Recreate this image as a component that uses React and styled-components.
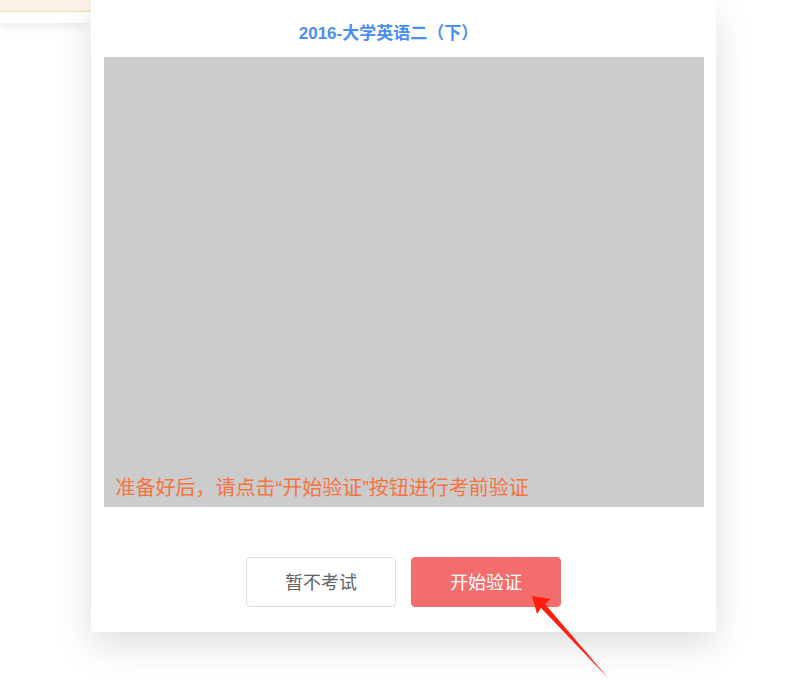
import React from 'react';
import styled, {createGlobalStyle} from 'styled-components';

const GlobalStyle = createGlobalStyle`
  html, body {
    margin: 0;
    padding: 0;
    background: #fff;
    font-family: "Liberation Sans", "Noto Sans CJK SC", sans-serif;
  }
`;

const Page = styled.div`
  position: relative;
  width: 802px;
  height: 681px;
  overflow: hidden;
  display: flex;
  align-items: flex-start;
`;

const SideHeader = styled.div`
  width: 91px;
  flex-shrink: 0;
  height: 23px;
  background: #fff;
  box-shadow: 0 2px 12px rgba(0, 0, 0, 0.1);
`;

const Notice = styled.div`
  height: 11px;
  background: #fdf4e8;
  border-bottom: 1px solid #f0dbb3;
`;

const Modal = styled.div`
  width: 625px;
  height: 632px;
  flex-shrink: 0;
  box-sizing: border-box;
  background: #fff;
  border-radius: 0 0 3px 3px;
  box-shadow: 0 14px 36px rgba(0, 0, 0, 0.13);
  padding: 22px 12px 0;
  display: flex;
  flex-direction: column;
  align-items: center;
  position: relative;
  z-index: 1;
`;

const Title = styled.h3`
  margin: 0 30px 0 0;
  height: 24px;
  line-height: 24px;
  font-size: 17px;
  font-weight: bold;
  color: #4b8ef2;
  font-family: "Liberation Sans", "Noto Sans CJK SC", sans-serif;
`;

const Preview = styled.div`
  margin-top: 11px;
  width: 600px;
  height: 450px;
  background: #cccccc;
  display: flex;
  align-items: flex-end;
  box-sizing: border-box;
  padding: 0 12px 6px;
`;

const Hint = styled.span`
  font-size: 20px;
  line-height: 26px;
  color: #f4733f;
  font-family: "Liberation Sans", "Noto Sans CJK SC", sans-serif;
`;

const Actions = styled.div`
  margin-top: 50px;
  display: flex;
  gap: 15px;
`;

const Button = styled.button`
  width: 150px;
  height: 50px;
  box-sizing: border-box;
  border-radius: 4px;
  font-size: 18px;
  line-height: 24px;
  padding: 0 0 2px;
  font-family: "Noto Sans CJK SC", sans-serif;
  cursor: pointer;
  border: 1px solid ${p => (p.$primary ? '#f46d6d' : '#dcdfe6')};
  background: ${p => (p.$primary ? '#f46d6d' : '#fff')};
  color: ${p => (p.$primary ? '#fff' : '#606266')};
`;

const Arrow = styled.svg`
  position: absolute;
  left: 0;
  top: 0;
  z-index: 2;
  pointer-events: none;
`;

const App = () => (
    <Page>
        <GlobalStyle/>
        <SideHeader>
            <Notice/>
        </SideHeader>
        <Modal>
            <Title>2016-大学英语二（下）</Title>
            <Preview>
                <Hint>准备好后，请点击“开始验证”按钮进行考前验证</Hint>
            </Preview>
            <Actions>
                <Button>暂不考试</Button>
                <Button $primary>开始验证</Button>
            </Actions>
        </Modal>
        <Arrow width="802" height="681" viewBox="0 0 802 681">
            <polygon
                points="532,596 551,599 545,604 609,679 541,608 537,614"
                fill="#ff1f10"
            />
        </Arrow>
    </Page>
);

export default App;
